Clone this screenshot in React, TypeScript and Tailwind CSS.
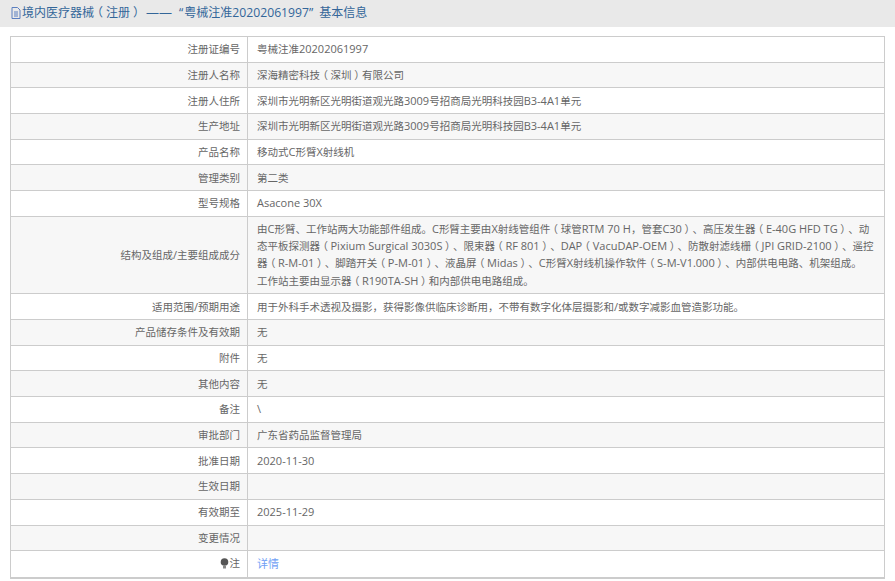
import React from "react";

const rows: [string, string][] = [
  ["注册证编号", "粤械注准20202061997"],
  ["注册人名称", "深海精密科技（深圳）有限公司"],
  ["注册人住所", "深圳市光明新区光明街道观光路3009号招商局光明科技园B3-4A1单元"],
  ["生产地址", "深圳市光明新区光明街道观光路3009号招商局光明科技园B3-4A1单元"],
  ["产品名称", "移动式C形臂X射线机"],
  ["管理类别", "第二类"],
  ["型号规格", "Asacone 30X"],
  ["结构及组成/主要组成成分", "由C形臂、工作站两大功能部件组成。C形臂主要由X射线管组件（球管RTM 70 H，管套C30）、高压发生器（E-40G HFD TG）、动态平板探测器（Pixium Surgical 3030S）、限束器（RF 801）、DAP（VacuDAP-OEM）、防散射滤线栅（JPI GRID-2100）、遥控器（R-M-01）、脚踏开关（P-M-01）、液晶屏（Midas）、C形臂X射线机操作软件（S-M-V1.000）、内部供电电路、机架组成。\n工作站主要由显示器（R190TA-SH）和内部供电电路组成。"],
  ["适用范围/预期用途", "用于外科手术透视及摄影，获得影像供临床诊断用，不带有数字化体层摄影和/或数字减影血管造影功能。"],
  ["产品储存条件及有效期", "无"],
  ["附件", "无"],
  ["其他内容", "无"],
  ["备注", "\\"],
  ["审批部门", "广东省药品监督管理局"],
  ["批准日期", "2020-11-30"],
  ["生效日期", ""],
  ["有效期至", "2025-11-29"],
  ["变更情况", ""],
];

const font = { fontFamily: '"Open Sans","Noto Sans CJK SC",sans-serif' };

function T({ text, large }: { text: string; large?: boolean }) {
  const parts = text.match(/[\x20-\x7e]+|（|）|[^\x20-\x7e（）]+/g) ?? [];
  return (
    <>
      {parts.map((p, i) => {
        if (p === "（" || p === "）")
          return (
            <span key={i} className={large ? "leading-none text-[12px] px-[0.25em] [font-feature-settings:'halt']" : "leading-none text-[10.5px] px-[0.25em] [font-feature-settings:'halt']"}>
              {p}
            </span>
          );
        if (/^[\x20-\x7e]+$/.test(p)) return <span key={i} className={large ? "leading-none text-[12.2px]" : "leading-none text-[11px]"}>{p}</span>;
        return <span key={i} className={large ? "leading-none text-[12px]" : "leading-none text-[10.5px]"}>{p}</span>;
      })}
    </>
  );
}

function Row({ label, value, odd, tall }: { label: React.ReactNode; value: React.ReactNode; odd: boolean; tall?: boolean }) {
  return (
    <div className={`flex border-b border-[#cccccc] ${odd ? "bg-white" : "bg-[#f7f7f7]"} ${tall ? "h-[77.5px]" : "h-[25.7px]"}`}>
      <div className="w-[237px] shrink-0 flex items-center justify-end pr-[7px] pb-[1px] border-r border-[#cccccc] text-[#666666]">{label}</div>
      <div className={`flex-1 min-w-0 pl-[9px] pr-[8px] text-[#666666] ${tall ? "pt-[3px] whitespace-pre-line" : "flex items-center pb-[1px]"}`}>{value}</div>
    </div>
  );
}

export default function App() {
  return (
    <div className="w-[895px] h-[581px] overflow-hidden bg-white text-[11px] leading-[17.25px] [text-spacing-trim:space-all]" style={font}>
      <div className="h-[27px] bg-[#e9e9e9] flex items-center pb-[1px] pl-[11px] text-[#336699]">
        <svg width="10" height="12" viewBox="0 0 10 12" fill="none" stroke="#5b7fc0" strokeWidth="1" className="mr-[1px] shrink-0">
          <path d="M1 .5h5.5L9 3v8.5H1zM3 5h4M3 7h4M3 9h4" />
        </svg>
        <span className="whitespace-nowrap"><T text="境内医疗器械（注册）" large /></span>
        <span className="ml-[4px] text-[13px]">——</span>
        <span className="ml-[7px] whitespace-nowrap">
          <span className="text-[12.2px] mr-[1px]">“</span>
          <T text="粤械注准20202061997" large />
          <span className="text-[12.2px] mr-[6px]">”</span>
          <T text="基本信息" large />
        </span>
      </div>
      <div className="mx-[10px] mt-[9px] w-[875px] border-t border-l border-r border-b-2 border-[#cccccc]">
        {rows.map(([l, v], i) => (
          <Row key={i} label={<span><T text={l} /></span>} value={<span><T text={v} /></span>} odd={i % 2 === 0} tall={i === 7} />
        ))}
        <div className="flex bg-white h-[25.5px]">
          <div className="w-[237px] shrink-0 flex items-center justify-end pr-[7px] pb-[1px] border-r border-[#cccccc] text-[#666666]">
            <svg width="9" height="11" viewBox="0 0 9 11" className="mr-[1px]">
              <circle cx="4.5" cy="4" r="3.8" fill="#555555" />
              <rect x="3" y="8" width="3" height="2.5" fill="#888888" />
            </svg>
            <T text="注" />
          </div>
          <div className="flex-1 flex items-center pl-[9px] pb-[1px]">
            <a className="text-[#6f9ff5] text-[11px]">详情</a>
          </div>
        </div>
      </div>
    </div>
  );
}
